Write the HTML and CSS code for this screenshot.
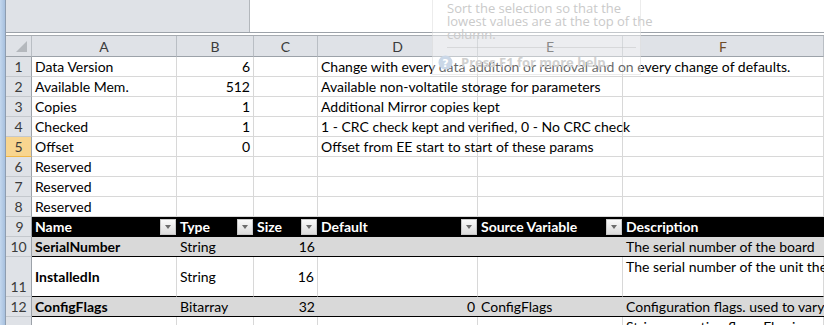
FILE: index.html
```html
<!DOCTYPE html>
<html lang="en">
<head>
  <meta charset="UTF-8" />
  <title>Parameters sheet</title>
  <link rel="stylesheet" href="styles.css">
</head>
<body>
  <div class="window">
    <div class="frame-edge"></div>
    <div class="main">
      <div class="topbar">
        <div class="namebox"></div>
        <div class="formula"></div>
      </div>
      <div class="topgap"></div>

      <div class="sheet">
        <div class="row colhead">
          <div class="cell corner"><span class="corner-tri"></span></div>
          <div class="cell">A</div>
          <div class="cell">B</div>
          <div class="cell">C</div>
          <div class="cell">D</div>
          <div class="cell">E</div>
          <div class="cell active-col">F</div>
        </div>

        <div class="row">
          <div class="cell num">1</div>
          <div class="cell">Data Version</div>
          <div class="cell right">6</div>
          <div class="cell"></div>
          <div class="cell overflow">Change with every data addition or removal and on every change of defaults.</div>
          <div class="cell"></div>
          <div class="cell"></div>
        </div>
        <div class="row">
          <div class="cell num">2</div>
          <div class="cell">Available Mem.</div>
          <div class="cell right">512</div>
          <div class="cell"></div>
          <div class="cell overflow">Available non-voltatile storage for parameters</div>
          <div class="cell"></div>
          <div class="cell"></div>
        </div>
        <div class="row">
          <div class="cell num">3</div>
          <div class="cell">Copies</div>
          <div class="cell right">1</div>
          <div class="cell"></div>
          <div class="cell">Additional Mirror copies kept</div>
          <div class="cell"></div>
          <div class="cell"></div>
        </div>
        <div class="row">
          <div class="cell num">4</div>
          <div class="cell">Checked</div>
          <div class="cell right">1</div>
          <div class="cell"></div>
          <div class="cell overflow">1 - CRC check kept and verified, 0 - No CRC check</div>
          <div class="cell"></div>
          <div class="cell"></div>
        </div>
        <div class="row">
          <div class="cell num selected">5</div>
          <div class="cell">Offset</div>
          <div class="cell right">0</div>
          <div class="cell"></div>
          <div class="cell">Offset from EE start to start of these params</div>
          <div class="cell"></div>
          <div class="cell"></div>
        </div>
        <div class="row">
          <div class="cell num">6</div>
          <div class="cell">Reserved</div>
          <div class="cell"></div>
          <div class="cell"></div>
          <div class="cell"></div>
          <div class="cell"></div>
          <div class="cell"></div>
        </div>
        <div class="row">
          <div class="cell num">7</div>
          <div class="cell">Reserved</div>
          <div class="cell"></div>
          <div class="cell"></div>
          <div class="cell"></div>
          <div class="cell"></div>
          <div class="cell"></div>
        </div>
        <div class="row">
          <div class="cell num">8</div>
          <div class="cell">Reserved</div>
          <div class="cell"></div>
          <div class="cell"></div>
          <div class="cell"></div>
          <div class="cell"></div>
          <div class="cell"></div>
        </div>

        <!-- table header -->
        <div class="row thead">
          <div class="cell num">9</div>
          <div class="cell"><span class="label">Name</span><span class="filter"></span></div>
          <div class="cell"><span class="label">Type</span><span class="filter"></span></div>
          <div class="cell"><span class="label">Size</span><span class="filter"></span></div>
          <div class="cell"><span class="label">Default</span><span class="filter"></span></div>
          <div class="cell"><span class="label">Source Variable</span><span class="filter"></span></div>
          <div class="cell"><span class="label">Description</span></div>
        </div>

        <div class="row band">
          <div class="cell num">10</div>
          <div class="cell bold">SerialNumber</div>
          <div class="cell">String</div>
          <div class="cell right">16</div>
          <div class="cell"></div>
          <div class="cell"></div>
          <div class="cell">The serial number of the board</div>
        </div>
        <div class="row plain tall">
          <div class="cell num">11</div>
          <div class="cell bold middle">InstalledIn</div>
          <div class="cell middle">String</div>
          <div class="cell right middle">16</div>
          <div class="cell"></div>
          <div class="cell"></div>
          <div class="cell top">The serial number of the unit the board is installed in</div>
        </div>
        <div class="row band">
          <div class="cell num">12</div>
          <div class="cell bold">ConfigFlags</div>
          <div class="cell">Bitarray</div>
          <div class="cell right">32</div>
          <div class="cell right">0</div>
          <div class="cell">ConfigFlags</div>
          <div class="cell">Configuration flags. used to vary behaviour</div>
        </div>
        <div class="row plain tall">
          <div class="cell num">13</div>
          <div class="cell"></div>
          <div class="cell"></div>
          <div class="cell"></div>
          <div class="cell"></div>
          <div class="cell"></div>
          <div class="cell top">String operating flags. Flag is used</div>
        </div>
      </div>
    </div>

    <!-- fading-in screen tip over the sort button -->
    <div class="tooltip">
      <p class="tip-body">Sort the selection so that the<br>lowest values are at the top of the<br>column.</p>
      <div class="tip-help">
        <svg width="15" height="15" viewBox="0 0 15 15">
          <circle cx="7.5" cy="7.5" r="7" fill="#cad7e7"/>
          <text x="7.5" y="11.5" text-anchor="middle" font-size="11" font-weight="bold" fill="#ffffff" font-family="DejaVu Sans, sans-serif">?</text>
        </svg>
        <span>Press F1 for more help.</span>
      </div>
    </div>
  </div>
</body>
</html>
```

FILE: styles.css
```css
* {
  box-sizing: border-box;
}

body {
  margin: 0;
  padding: 0;
  background: #ffffff;
  font-family: 'Lato', 'Open Sans', sans-serif;
  font-size: 14px;
  color: #000;
}

.window {
  position: relative;
  display: flex;
  width: 824px;
  height: 325px;
  overflow: hidden;
}

.frame-edge {
  width: 6px;
  flex: none;
  background: linear-gradient(to right, #c3d7ee, #a7c0de);
  border-right: 1px solid #8e9db0;
}

.main {
  flex: 1;
  min-width: 0;
}

/* formula bar area */
.topbar {
  display: flex;
  height: 33px;
  border-bottom: 1px solid #9ca2a9;
}

.namebox {
  width: 244px;
  background: #dfe2e7;
  border-right: 1px solid #b3b7bc;
}

.formula {
  flex: 1;
  background: #ffffff;
}

.topgap {
  height: 2px;
  background: #ffffff;
}

/* grid */
.row {
  display: grid;
  grid-template-columns: 26px 145px 77px 64px 160px 145px 1fr;
  height: 20px;
}

.cell {
  display: flex;
  align-items: flex-end;
  padding: 0 3px 0 3px;
  line-height: 18px;
  border-right: 1px solid #d8d8d8;
  border-bottom: 1px solid #d8d8d8;
  white-space: nowrap;
  min-width: 0;
}

.cell.overflow {
  overflow: visible;
  position: relative;
  z-index: 1;
}

.right {
  justify-content: flex-end;
  padding-right: 3px;
}

.bold {
  font-weight: bold;
}

.middle {
  align-items: center;
}

.top {
  align-items: flex-start;
  padding-top: 1px;
}

/* column and row headings */
.colhead {
  height: 22px;
  background: #dfe2e7;
  border-top: 1px solid #a6abb1;
}

.colhead .cell {
  justify-content: center;
  color: #3b3b3b;
  border-right: 1px solid #b9bec4;
  border-bottom: 1px solid #9ca2a9;
  padding-bottom: 0;
}

.colhead .active-col {
  color: #6e4b28;
}

.corner {
  position: relative;
}

.corner-tri {
  position: absolute;
  right: 4px;
  bottom: 4px;
  width: 0;
  height: 0;
  border-left: 11px solid transparent;
  border-bottom: 11px solid #b4b8bd;
}

.num {
  justify-content: center;
  background: #dfe2e7;
  color: #3b3b3b;
  border-right: 1px solid #9ca2a9;
  border-bottom: 1px solid #c4c8cd;
}

.num.selected {
  background: #f8d58f;
  border-bottom: 1px solid #f0b747;
}

/* table */
.thead .cell {
  background: #000;
  color: #fff;
  font-weight: bold;
  border-right: none;
  border-bottom: 1px solid #000;
  justify-content: space-between;
  padding-right: 1px;
}

.thead .cell.num {
  background: #dfe2e7;
  color: #3b3b3b;
  font-weight: normal;
  justify-content: center;
  border-right: 1px solid #9ca2a9;
  border-bottom: 1px solid #c4c8cd;
}

.filter {
  position: relative;
  width: 16px;
  height: 16px;
  margin-bottom: 1px;
  background: linear-gradient(#fafafa, #dcdcdc);
  border: 1px solid #c8c8c8;
  flex: none;
}

.filter::after {
  content: "";
  position: absolute;
  left: 4px;
  top: 5px;
  border-left: 3.5px solid transparent;
  border-right: 3.5px solid transparent;
  border-top: 4px solid #6c6c6c;
}

.band .cell {
  background: #d9d9d9;
  border-right: none;
  border-bottom: 1px solid #000;
}

.plain .cell {
  border-bottom: 1px solid #000;
}

.band .cell.num,
.plain .cell.num {
  background: #dfe2e7;
  border-right: 1px solid #9ca2a9;
  border-bottom: 1px solid #c4c8cd;
}

.tall {
  height: 40px;
}

/* screen tip */
.tooltip {
  position: absolute;
  left: 432px;
  top: -20px;
  width: 209px;
  height: 95px;
  background: rgba(255, 255, 255, 0.4);
  border: 1px solid rgba(200, 200, 200, 0.35);
  z-index: 5;
  font-family: 'Open Sans', sans-serif;
  font-size: 13px;
  color: #cacaca;
}

.tip-body {
  margin: 21px 0 0 14px;
  line-height: 13px;
  padding-bottom: 6px;
  border-bottom: 1px solid rgba(190, 190, 190, 0.45);
  margin-right: 4px;
  white-space: nowrap;
}

.tip-help {
  display: flex;
  align-items: center;
  gap: 8px;
  margin: 5px 0 0 5px;
  color: #d0d0d0;
  font-weight: bold;
}
```
